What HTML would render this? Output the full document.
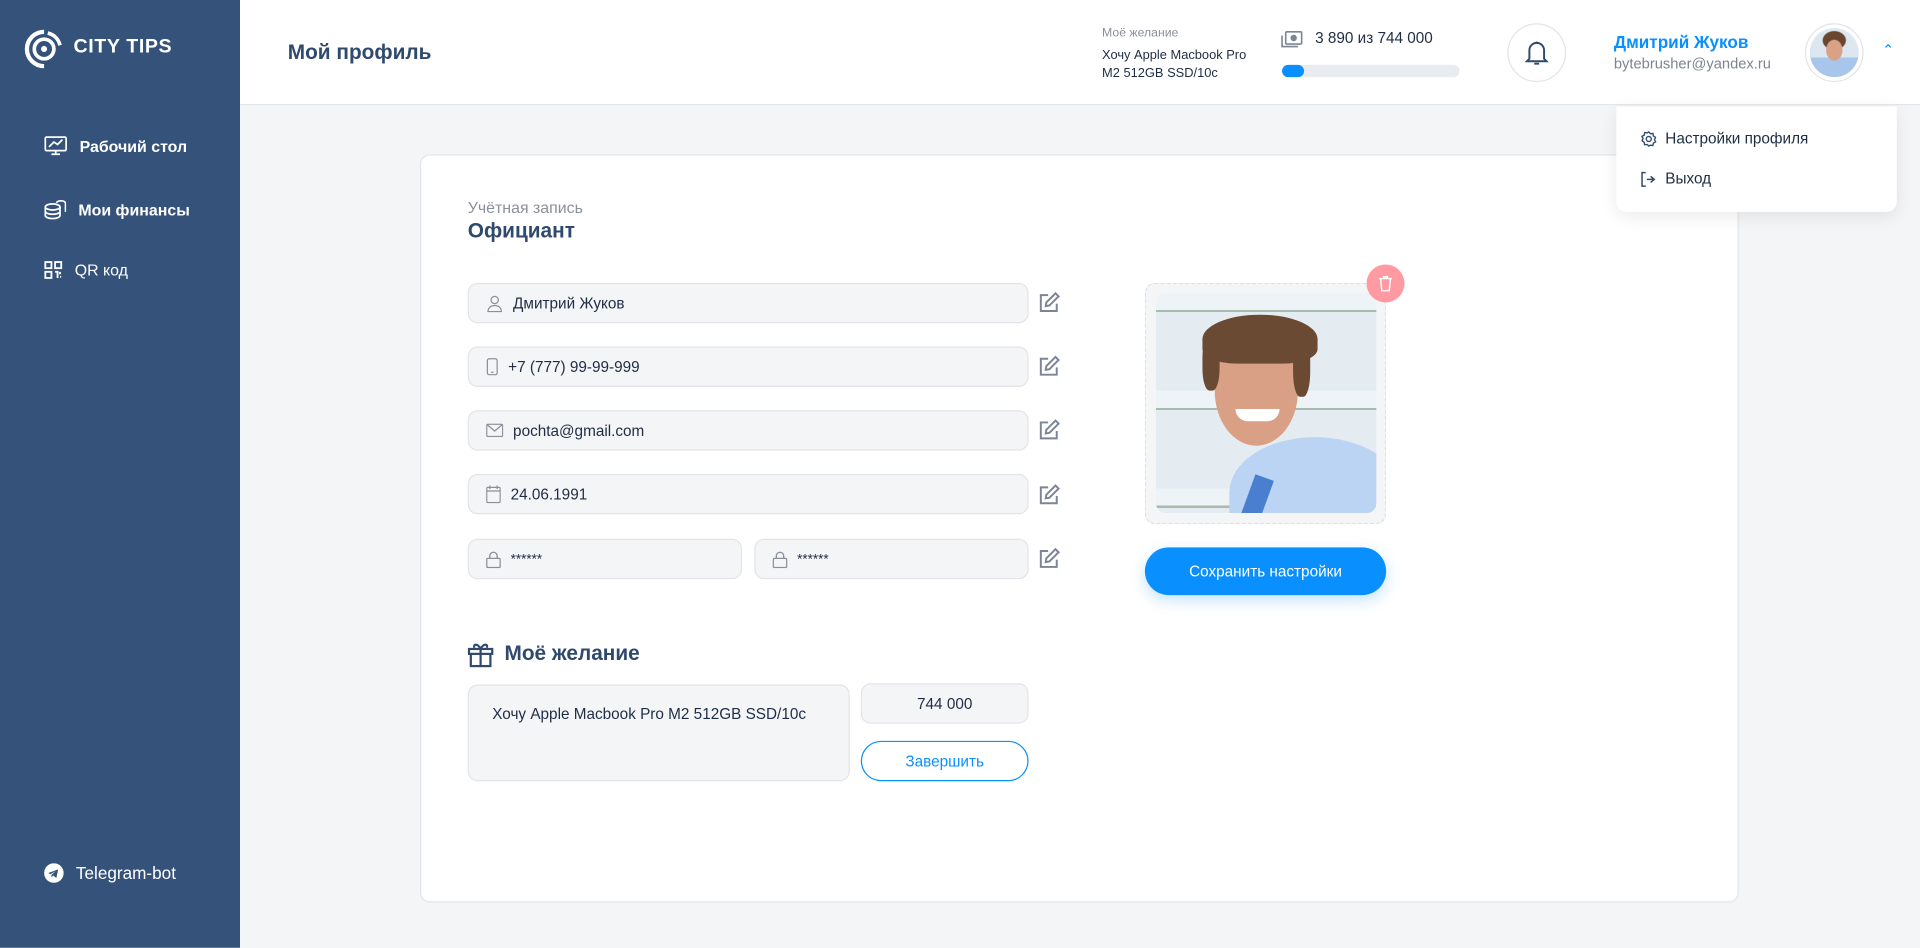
<!DOCTYPE html>
<html><head><meta charset="utf-8"><style>
*{box-sizing:border-box;margin:0;padding:0}
html,body{width:1920px;height:948px;overflow:hidden;background:#f4f5f7}
#w{width:1568px;height:774px;transform:scale(1.22449);transform-origin:0 0;position:relative;font-family:"Liberation Sans","DejaVu Sans",sans-serif;color:#1f2d44;background:#f4f5f7}
.a{position:absolute}
#side{left:0;top:0;width:196px;height:774px;background:#34527a}
.nav{left:36px;color:#fff;font-size:13px;font-weight:bold;display:flex;align-items:center;gap:10px}
#head{left:196px;top:0;width:1372px;height:86px;background:#fff;border-bottom:1px solid #e2e4e8}
.card{left:343px;top:126px;width:1077px;height:611px;background:#fff;border:1px solid #e3e5e8;border-radius:8px}
.inp{position:absolute;height:33px;background:#f4f5f7;border:1px solid #e2e4e8;border-radius:8px;font-size:12.5px;display:flex;align-items:center;padding-left:14px;gap:8px;color:#1f2d44}
.ed{position:absolute;left:848px}
</style></head><body><div id="w">
<div class="a" id="side">
 <svg class="a" style="left:19px;top:23px" width="34" height="34" viewBox="0 0 34 34"><path d="M17 3a14 14 0 1 0 0 28" fill="none" stroke="#fff" stroke-width="3.5"/><path d="M20 4a13 13 0 0 1 10 10" fill="none" stroke="#fff" stroke-width="3"/><circle cx="17" cy="17" r="8" fill="none" stroke="#fff" stroke-width="3"/><circle cx="17" cy="17" r="2.5" fill="#fff"/></svg>
 <div class="a" style="left:60px;top:30px;color:#fff;font-weight:900;font-size:16px;letter-spacing:0.5px">CITY TIPS</div>
 <div class="a nav" style="top:111px"><svg width="19" height="17" viewBox="0 0 19 17" fill="none" stroke="#fff" stroke-width="1.4"><rect x="1" y="1" width="17" height="11" rx="1"/><path d="M4 9l4-4 3 2 4-4M6 15h7M9.5 12v3"/></svg>Рабочий стол</div>
 <div class="a nav" style="top:162px"><svg width="18" height="18" viewBox="0 0 18 18" fill="none" stroke="#fff" stroke-width="1.4"><ellipse cx="7" cy="7" rx="6" ry="2.5"/><path d="M1 7v7c0 1.4 2.7 2.5 6 2.5s6-1.1 6-2.5V7M1 10.5c0 1.4 2.7 2.5 6 2.5s6-1.1 6-2.5"/><path d="M10 3.5c.8-1 2.5-1.5 4-1.5 2.2 0 3.5 1 3.5 2v7"/></svg>Мои финансы</div>
 <div class="a nav" style="top:213px;font-weight:normal"><svg width="15" height="15" viewBox="0 0 15 15" fill="none" stroke="#fff" stroke-width="1.5"><rect x="1" y="1" width="5" height="5"/><rect x="9" y="1" width="5" height="5"/><rect x="1" y="9" width="5" height="5"/><path d="M9 9h2v5M13 9v2M13 13h1"/></svg>QR код</div>
 <div class="a nav" style="top:705px;font-size:14px;font-weight:normal"><svg width="16" height="16" viewBox="0 0 16 16"><circle cx="8" cy="8" r="8" fill="#fff"/><path d="M3.5 8l8-3-1.5 7-2.5-2-1.5 1.5v-2l3.5-3-4.5 2.5z" fill="#34527a"/></svg>Telegram-bot</div>
</div>
<div class="a" id="head">
 <div class="a" style="left:39px;top:33px;font-size:17px;font-weight:bold;color:#2f4a6d">Мой профиль</div>
 <div class="a" style="left:704px;top:22px;font-size:10px;color:#8a9099">Моё желание</div>
 <div class="a" style="left:704px;top:38px;font-size:10.5px;line-height:15px;color:#1f2d44">Хочу Apple Macbook Pro<br>M2 512GB SSD/10c</div>
 <svg class="a" style="left:850px;top:25px" width="18" height="15" viewBox="0 0 18 15" fill="none" stroke="#7b8594" stroke-width="1.3"><rect x="4" y="1" width="13" height="10" rx="1"/><circle cx="10.5" cy="6" r="2" fill="#7b8594"/><path d="M1 4v9h13"/></svg>
 <div class="a" style="left:878px;top:24px;font-size:12.5px">3 890 из 744 000</div>
 <div class="a" style="left:851px;top:53px;width:145px;height:10px;border-radius:5px;background:#e8ebef"><div style="width:18px;height:10px;border-radius:5px;background:#0a8fff"></div></div>
 <div class="a" style="left:1035px;top:19px;width:48px;height:48px;border-radius:50%;border:1px solid #e2e4e8"><svg class="a" style="left:13px;top:12px" width="20" height="22" viewBox="0 0 20 22" fill="none" stroke="#2f4a6d" stroke-width="1.6"><path d="M4 16V9a6 6 0 0 1 12 0v7l2 2H2z"/><path d="M8 20h4M10 2v1"/></svg></div>
 <div class="a" style="left:1122px;top:26px;font-size:14px;font-weight:bold;color:#0a8fff">Дмитрий Жуков</div>
 <div class="a" style="left:1122px;top:45px;font-size:12px;color:#7d8590">bytebrusher@yandex.ru</div>
 <div class="a" style="left:1278px;top:19px;width:48px;height:48px;border-radius:50%;border:1px solid #e2e4e8;background:#fff;overflow:hidden"><div class="a" style="left:3px;top:3px;width:40px;height:40px;border-radius:50%;background:radial-gradient(ellipse 7px 9px at 20px 18px,#d9a286 90%,transparent 100%),radial-gradient(ellipse 10px 8px at 20px 10px,#6a4630 90%,transparent 100%),linear-gradient(#dce7f0 60%,#a8c6ec 60%)"></div></div>
 <div class="a" style="left:1341px;top:34px;color:#0a8fff;font-size:12px">&#8963;</div>
</div>
<div class="a card">
 <div class="a" style="left:38px;top:35px;font-size:13px;color:#8a9099">Учётная запись</div>
 <div class="a" style="left:38px;top:52px;font-size:17px;font-weight:bold;color:#2f4a6d">Официант</div>
</div>
<div class="inp" style="left:382px;top:231px;width:458px"><svg width="14" height="14" viewBox="0 0 14 14" fill="none" stroke="#8a9099" stroke-width="1"><circle cx="7" cy="4" r="3"/><path d="M1.5 13.5c0-3 2.5-5 5.5-5s5.5 2 5.5 5z"/></svg>Дмитрий Жуков</div>
<div class="inp" style="left:382px;top:283px;width:458px"><svg width="10" height="15" viewBox="0 0 10 15" fill="none" stroke="#8a9099" stroke-width="1"><rect x="1" y="1" width="8" height="13" rx="1.5"/><path d="M4 12h2"/></svg>+7 (777) 99-99-999</div>
<div class="inp" style="left:382px;top:335px;width:458px"><svg width="14" height="11" viewBox="0 0 14 11" fill="none" stroke="#8a9099" stroke-width="1"><rect x=".5" y=".5" width="13" height="10" rx="1"/><path d="M1 1l6 5 6-5"/></svg>pochta@gmail.com</div>
<div class="inp" style="left:382px;top:387px;width:458px"><svg width="12" height="15" viewBox="0 0 12 15" fill="none" stroke="#8a9099" stroke-width="1"><rect x=".5" y="2" width="11" height="12.5" rx="1"/><path d="M.5 5h11M3 .5v3M9 .5v3"/></svg>24.06.1991</div>
<div class="inp" style="left:382px;top:440px;width:224px;font-size:11px"><svg width="12" height="14" viewBox="0 0 12 14" fill="none" stroke="#8a9099" stroke-width="1.1"><rect x=".5" y="6" width="11" height="7.5" rx="1"/><path d="M3 6V4a3 3 0 0 1 6 0v2"/></svg>******</div>
<div class="inp" style="left:616px;top:440px;width:224px;font-size:11px"><svg width="12" height="14" viewBox="0 0 12 14" fill="none" stroke="#8a9099" stroke-width="1.1"><rect x=".5" y="6" width="11" height="7.5" rx="1"/><path d="M3 6V4a3 3 0 0 1 6 0v2"/></svg>******</div>
<svg class="ed" style="top:238px" width="18" height="18" viewBox="0 0 18 18" fill="none" stroke="#7b8594" stroke-width="1.6"><path d="M8 3H2v13h13v-6"/><path d="M14 1.5l2.5 2.5L9 11.5 6 12l.5-3z"/></svg>
<svg class="ed" style="top:290px" width="18" height="18" viewBox="0 0 18 18" fill="none" stroke="#7b8594" stroke-width="1.6"><path d="M8 3H2v13h13v-6"/><path d="M14 1.5l2.5 2.5L9 11.5 6 12l.5-3z"/></svg>
<svg class="ed" style="top:342px" width="18" height="18" viewBox="0 0 18 18" fill="none" stroke="#7b8594" stroke-width="1.6"><path d="M8 3H2v13h13v-6"/><path d="M14 1.5l2.5 2.5L9 11.5 6 12l.5-3z"/></svg>
<svg class="ed" style="top:395px" width="18" height="18" viewBox="0 0 18 18" fill="none" stroke="#7b8594" stroke-width="1.6"><path d="M8 3H2v13h13v-6"/><path d="M14 1.5l2.5 2.5L9 11.5 6 12l.5-3z"/></svg>
<svg class="ed" style="top:447px" width="18" height="18" viewBox="0 0 18 18" fill="none" stroke="#7b8594" stroke-width="1.6"><path d="M8 3H2v13h13v-6"/><path d="M14 1.5l2.5 2.5L9 11.5 6 12l.5-3z"/></svg>
<div class="a" style="left:935px;top:231px;width:197px;height:197px;border:1px dashed #dde0e4;border-radius:8px;background:#f4f5f7"></div>
<div class="a" style="left:944px;top:239px;width:180px;height:180px;border-radius:8px;overflow:hidden;background:repeating-linear-gradient(#eef3f7 0,#eef3f7 14px,#a7bcae 14px,#a7bcae 16px,#e4ecf2 16px,#e4ecf2 80px)">
 <div class="a" style="left:60px;top:118px;width:140px;height:90px;border-radius:50% 50% 0 0;background:#bcd4f4"></div>
 <div class="a" style="left:75px;top:150px;width:16px;height:34px;background:#4a7fcf;transform:rotate(20deg)"></div>
 <div class="a" style="left:48px;top:35px;width:68px;height:90px;border-radius:45% 45% 50% 50%;background:#d9a085"></div>
 <div class="a" style="left:38px;top:18px;width:94px;height:40px;border-radius:50% 50% 30% 30%;background:#6b4a34"></div>
 <div class="a" style="left:38px;top:35px;width:14px;height:45px;border-radius:40%;background:#6b4a34"></div>
 <div class="a" style="left:112px;top:35px;width:14px;height:50px;border-radius:40%;background:#6b4a34"></div>
 <div class="a" style="left:65px;top:95px;width:36px;height:10px;border-radius:0 0 18px 18px;background:#fff"></div>
</div>
<div class="a" style="left:1116px;top:216px;width:31px;height:31px;border-radius:50%;background:#ff9aa2"><svg class="a" style="left:10px;top:9px" width="11" height="13" viewBox="0 0 11 13" fill="none" stroke="#fff" stroke-width="1.2"><path d="M0 2.5h11M4 2.5V1h3v1.5M1.5 2.5l1 10h6l1-10"/></svg></div>
<div class="a" style="left:935px;top:447px;width:197px;height:39px;border-radius:20px;background:#0a8fff;color:#fff;font-size:12.5px;display:flex;align-items:center;justify-content:center;box-shadow:0 4px 12px rgba(10,143,255,.25)">Сохранить настройки</div>
<svg class="a" style="left:382px;top:524px" width="21" height="21" viewBox="0 0 21 21" fill="none" stroke="#2f4a6d" stroke-width="1.8"><rect x="1" y="6" width="19" height="4"/><path d="M2.5 10v10h16V10M10.5 6v14M10.5 6C8 1 4 2 5.5 5M10.5 6c2.5-5 6.5-4 5-1"/></svg>
<div class="a" style="left:412px;top:524px;font-size:17px;font-weight:bold;color:#2f4a6d">Моё желание</div>
<div class="inp" style="left:382px;top:559px;width:312px;height:79px;align-items:flex-start;padding:16px 19px;font-size:12.5px">Хочу Apple Macbook Pro M2 512GB SSD/10c</div>
<div class="inp" style="left:703px;top:558px;width:137px;height:33px;justify-content:center;padding:0">744 000</div>
<div class="a" style="left:703px;top:605px;width:137px;height:33px;border:1px solid #0a8fff;border-radius:17px;color:#0a8fff;font-size:12.5px;display:flex;align-items:center;justify-content:center;background:#fff">Завершить</div>
<div class="a" style="left:1320px;top:87px;width:229px;height:86px;background:#fff;border-radius:0 0 8px 8px;box-shadow:0 4px 14px rgba(0,0,0,.08)">
 <div class="a" style="left:20px;top:19px;font-size:12.5px;display:flex;gap:7px;align-items:center"><svg width="13" height="13" viewBox="0 0 14 14" fill="none" stroke="#2f4a6d" stroke-width="1.2"><circle cx="7" cy="7" r="2.2"/><path d="M7 .8l1.5 1.6 2.2-.3.3 2.2L12.9 5.6 12 7.6l1 2-2 1-.4 2.2-2.2-.3L7 13.2 5.5 11.8l-2.2.3-.3-2.2L1.1 8.6 2 6.6 1 4.6l2-1L3.4 1.4l2.2.3z"/></svg>Настройки профиля</div>
 <div class="a" style="left:20px;top:52px;font-size:12.5px;display:flex;gap:7px;align-items:center"><svg width="13" height="13" viewBox="0 0 13 13" fill="none" stroke="#2f4a6d" stroke-width="1.2"><path d="M4 1H1v11h3M5 6.5h5M8 4l3 2.5L8 9"/></svg>Выход</div>
</div>
</div></body></html>
